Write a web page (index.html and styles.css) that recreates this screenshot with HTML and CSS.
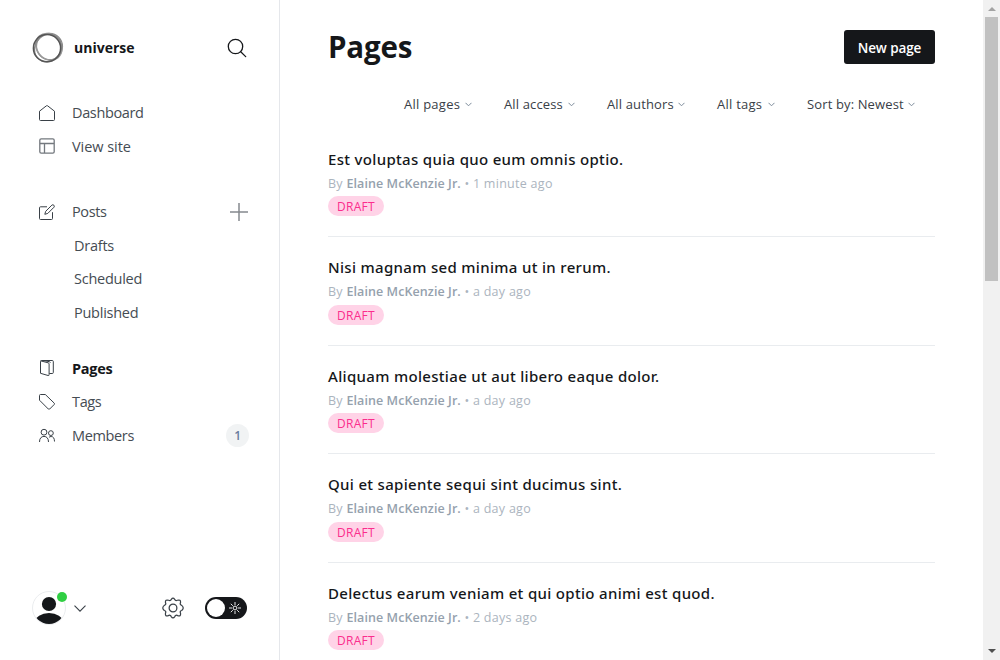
FILE: index.html
```html
<!DOCTYPE html>
<html lang="en">
<head>
<meta charset="utf-8">
<title>Pages - universe</title>
<link rel="stylesheet" href="styles.css">
</head>
<body>
<div class="app">
  <nav class="sidebar">
    <header class="brand">
      <svg class="brand-logo" viewBox="0 0 32 32" fill="none"><ellipse cx="17.500" cy="14.500" rx="13" ry="13.200" stroke="#8a8a8a" stroke-width="1.200"/><ellipse cx="16.800" cy="14.800" rx="14.200" ry="12" transform="rotate(50 16.800 14.800)" stroke="#999" stroke-width="1.600"/><ellipse cx="16" cy="16" rx="14.400" ry="12.800" transform="rotate(-50 16 16)" stroke="#888" stroke-width="1.300"/><circle cx="15" cy="16.200" r="13.600" stroke="#555" stroke-width="1.500"/></svg>
      <span class="brand-name">universe</span>
      <svg class="search" viewBox="0 0 20 20" fill="none" stroke="#15171a" stroke-width="1.3" stroke-linecap="round"><circle cx="8.5" cy="8.5" r="7.2"/><path d="M13.700 13.700l5 4.900"/></svg>
    </header>
    <ul class="menu menu-top">
      <li><svg class="icon" viewBox="0 0 16 16"><path d="M.5 6.2v8.3a1 1 0 0 0 1 1h13a1 1 0 0 0 1-1V6.2L8.6.8a1 1 0 0 0-1.2 0z"/></svg><span>Dashboard</span></li>
      <li><svg class="icon soft" viewBox="0 0 16 16"><rect x=".8" y=".8" width="14.4" height="14.4" rx="1.4"/><path d="M1 5.500h14M5.500 5.500V15"/></svg><span class="t-view">View site</span></li>
    </ul>
    <ul class="menu menu-posts">
      <li><svg class="icon" viewBox="0 0 16 16"><path d="M8 2.800H1.500a1 1 0 0 0-1 1v10.700a1 1 0 0 0 1 1h11a1 1 0 0 0 1-1V8.200M12.900 1.100a1.500 1.500 0 0 1 2.100 2.100L8.800 9.400l-3 .9.900-3z"/></svg><span>Posts</span><svg class="plus" viewBox="0 0 18 18"><path d="M9 0v18M0 9h18"/></svg></li>
      <li class="sub"><span>Drafts</span></li>
      <li class="sub"><span>Scheduled</span></li>
      <li class="sub"><span>Published</span></li>
    </ul>
    <ul class="menu">
      <li class="active"><svg class="icon" viewBox="0 0 16 16"><path d="M1.500 1.500v11.800l7.600 2.200a.8.800 0 0 0 1-.8V4a1.200 1.200 0 0 0-.9-1.200L1.700.9M1.500 1.500a1 1 0 0 1 1-1h10.800a1 1 0 0 1 1 1v11a1 1 0 0 1-1 1h-3M4 .5l6.500 1.200a1 1 0 0 1 .8 1"/></svg><span>Pages</span></li>
      <li><svg class="icon" viewBox="0 0 16 16"><path d="M.5 1.500v4.700L9.300 15a1 1 0 0 0 1.400 0l4.500-4.500a1 1 0 0 0 0-1.400L6.300.5H1.500a1 1 0 0 0-1 1z"/></svg><span>Tags</span></li>
      <li><svg class="icon" viewBox="0 0 16 16"><circle cx="5" cy="5.200" r="2.900"/><path d="M.5 15c0-3.700 1.800-5.600 4.500-5.600s4.500 1.900 4.500 5.600M10 10.300c.6-.5 1.300-.8 2.100-.8 2.200 0 3.400 1.800 3.400 5"/><circle cx="11.900" cy="6.100" r="2.400"/></svg><span>Members</span><b class="count">1</b></li>
    </ul>
    <footer class="account">
      <div class="avatar"><svg viewBox="0 0 34 34"><defs><clipPath id="face"><circle cx="17" cy="17" r="16"/></clipPath></defs><circle cx="17" cy="17" r="16.500" fill="#fff" stroke="#e5e7ea" stroke-width=".8"/><g clip-path="url(#face)" fill="#15171a"><circle cx="17" cy="13" r="7.100"/><ellipse cx="17" cy="31.500" rx="14" ry="9.500"/></g></svg><i class="online"></i></div>
      <svg class="caret" viewBox="0 0 12 7"><path d="M.5.700L6 6.200 11.500.700"/></svg>
      <svg class="gear" viewBox="-.5 -.5 21 21"><circle cx="10" cy="10" r="3.700"/><path d="M8.400 1.700Q10-.6 11.600 1.700Q12.300 3.500 14.100 2.600Q17.500 1.700 17.200 4.700Q16.200 6.700 18.300 7.500Q21.200 10 18.300 12.400Q16.200 13 17.200 15.100Q17.600 18.400 14.500 17.300Q12.500 16.200 11.700 18.200Q10 20.700 8.300 18.200Q7.500 16.200 5.500 17.300Q2.400 18.400 2.800 15.100Q3.800 13 1.700 12.400Q-1.200 10 1.700 7.500Q3.800 6.700 2.800 4.700Q2.500 1.700 5.900 2.600Q7.700 3.500 8.400 1.700z"/></svg>
      <div class="toggle"><i class="knob"></i><svg class="sun" viewBox="0 0 12 12"><circle cx="6" cy="6" r="1.900"/><path d="M6 0v3M6 9v3M0 6h3M9 6h3M1.800 1.800l2 2M8.200 8.200l2 2M1.800 10.200l2-2M8.200 3.800l2-2"/></svg></div>
    </footer>
  </nav>
  <main class="main">
    <header class="head"><h1>Pages</h1><button class="new">New page</button></header>
    <div class="filters">
      <span class="filter f1"><span>All pages</span><svg viewBox="0 0 7 5"><path d="M.5.800l3 3 3-3"/></svg></span>
      <span class="filter f2"><span>All access</span><svg viewBox="0 0 7 5"><path d="M.5.800l3 3 3-3"/></svg></span>
      <span class="filter f3"><span>All authors</span><svg viewBox="0 0 7 5"><path d="M.5.800l3 3 3-3"/></svg></span>
      <span class="filter f4"><span>All tags</span><svg viewBox="0 0 7 5"><path d="M.5.800l3 3 3-3"/></svg></span>
      <span class="filter f5"><span>Sort by: Newest</span><svg viewBox="0 0 7 5"><path d="M.5.800l3 3 3-3"/></svg></span>
    </div>
    <section class="list">
      <article><h3>Est voluptas quia quo eum omnis optio.</h3><p>By <b>Elaine McKenzie Jr.</b> • 1 minute ago</p><span class="draft">DRAFT</span></article>
      <article><h3>Nisi magnam sed minima ut in rerum.</h3><p>By <b>Elaine McKenzie Jr.</b> • a day ago</p><span class="draft">DRAFT</span></article>
      <article><h3>Aliquam molestiae ut aut libero eaque dolor.</h3><p>By <b>Elaine McKenzie Jr.</b> • a day ago</p><span class="draft">DRAFT</span></article>
      <article><h3>Qui et sapiente sequi sint ducimus sint.</h3><p>By <b>Elaine McKenzie Jr.</b> • a day ago</p><span class="draft">DRAFT</span></article>
      <article><h3>Delectus earum veniam et qui optio animi est quod.</h3><p>By <b>Elaine McKenzie Jr.</b> • 2 days ago</p><span class="draft">DRAFT</span></article>
    </section>
  </main>
  <aside class="scrollbar"><i class="up"></i><i class="thumb"></i><i class="down"></i></aside>
</div>
</body>
</html>
```
FILE: styles.css
```css
* { box-sizing: border-box; }
body { margin: 0; background: #fff; color: #15171a; font-family: "Open Sans", "Noto Sans", sans-serif; }
svg { display: block; flex: none; fill: none; }
ul { list-style: none; margin: 0; padding: 0; }
.app { display: flex; width: 1000px; height: 660px; overflow: hidden; }

.sidebar { display: flex; flex-direction: column; width: 280px; flex: none; border-right: 1px solid #e5e7eb; padding: 32px 30px 35px 32px; }
.brand { display: flex; align-items: center; height: 32px; margin-bottom: 32px; }
.brand-logo { width: 32px; height: 32px; }
.brand-name { margin-left: 10px; padding-bottom: 2px; font-size: 14px; font-weight: 700; letter-spacing: 0; }
.search { width: 20px; height: 20px; margin-left: auto; margin-right: 2px; }
.menu li { display: flex; align-items: center; height: 33.500px; padding-left: 7px; font-size: 14.500px; font-weight: 400; color: #454c53; letter-spacing: -.36px; }
.menu-top { margin-bottom: 32px; }
.menu-posts { margin-bottom: 22.500px; }
.icon { width: 16px; height: 16px; margin-right: 17px; stroke: #394047; stroke-width: 1; stroke-linejoin: round; }
.icon.soft { stroke: #73787e; stroke-width: 1.300; }
.menu .t-view { letter-spacing: -.05px; }
.menu .sub { padding-left: 42px; letter-spacing: -.25px; }
.menu .active { font-weight: 700; color: #15171a; letter-spacing: -.3px; }
.plus { width: 18px; height: 18px; margin-left: auto; margin-right: 1px; stroke: #85898e; stroke-width: 1.500; }
.count { display: flex; align-items: center; justify-content: center; width: 23px; height: 23px; margin-left: auto; border-radius: 50%; background: #f1f3f4; color: #687b9d; font-size: 12px; font-weight: 600; }

.account { display: flex; align-items: center; height: 34px; margin-top: auto; }
.avatar { position: relative; width: 34px; height: 34px; }
.online { position: absolute; top: 1px; right: -1px; width: 10px; height: 10px; border-radius: 50%; background: #30cf43; }
.caret { width: 12px; height: 7px; margin-left: 8px; stroke: #394047; stroke-width: 1.100; }
.gear { width: 22px; height: 22px; margin-left: 76px; stroke: #394047; stroke-width: 1.200; }
.toggle { display: flex; align-items: center; width: 42px; height: 22px; margin-left: 21px; border-radius: 11px; background: #15171a; padding-left: 2px; }
.knob { width: 18px; height: 18px; border-radius: 50%; background: #fff; }
.sun { width: 12px; height: 12px; margin-left: 4px; stroke: #fff; stroke-width: .9; }

.main { flex: 1; padding: 30px 48px 0; min-width: 0; }
.head { display: flex; justify-content: space-between; align-items: center; height: 34px; }
h1 { margin: 0; padding-bottom: 2px; font-size: 29.500px; font-weight: 700; letter-spacing: -.2px; }
.new { width: 91px; height: 34px; border: 0; border-radius: 3px; background: #15171a; color: #fff; font: 600 13.500px "Open Sans", sans-serif; letter-spacing: -.1px; padding: 2px 0 0; }
.filters { display: flex; justify-content: flex-end; height: 20px; margin: 30px 20px 14.600px 0; gap: 32px; }
.filter { display: flex; align-items: center; justify-content: space-between; font-size: 13px; color: #394047; white-space: nowrap; letter-spacing: .13px; }
.filter svg { width: 7px; height: 5px; stroke: #7c8b9a; stroke-width: 1; }
.f1 { width: 68px; letter-spacing: .25px; }
.f2 { width: 71px; }
.f3 { width: 78px; }
.f4 { width: 58px; letter-spacing: .25px; }
.f5 { width: 108px; }

article { height: 108.500px; padding-top: 19.300px; border-bottom: 1px solid #e9ecef; }
article h3 { margin: 0; font-family: "Noto Sans", sans-serif; font-size: 15px; line-height: 22px; font-weight: 500; letter-spacing: .32px; }
article p { margin: 0; padding-top: 1.100px; font-size: 12.500px; line-height: 25.200px; color: #abb4be; letter-spacing: .28px; }
article p b { font-weight: 600; color: #95a1ad; letter-spacing: .08px; }
.draft { display: flex; align-items: center; justify-content: center; width: 56px; height: 20px; border-radius: 10px; background: #ffd3e7; color: #fb2d8d; font-size: 12px; letter-spacing: .25px; padding-top: 1px; }

.scrollbar { display: flex; flex-direction: column; align-items: center; width: 17px; flex: none; background: #f1f1f1; }
.up { border: 4px solid transparent; border-top: 0; border-bottom: 4px solid #a3a3a3; margin: 7px 0 6px; }
.thumb { width: 13px; height: 264px; background: #c1c1c1; }
.down { border: 4px solid transparent; border-bottom: 0; border-top: 4px solid #505050; margin: auto 0 7px; }
```
